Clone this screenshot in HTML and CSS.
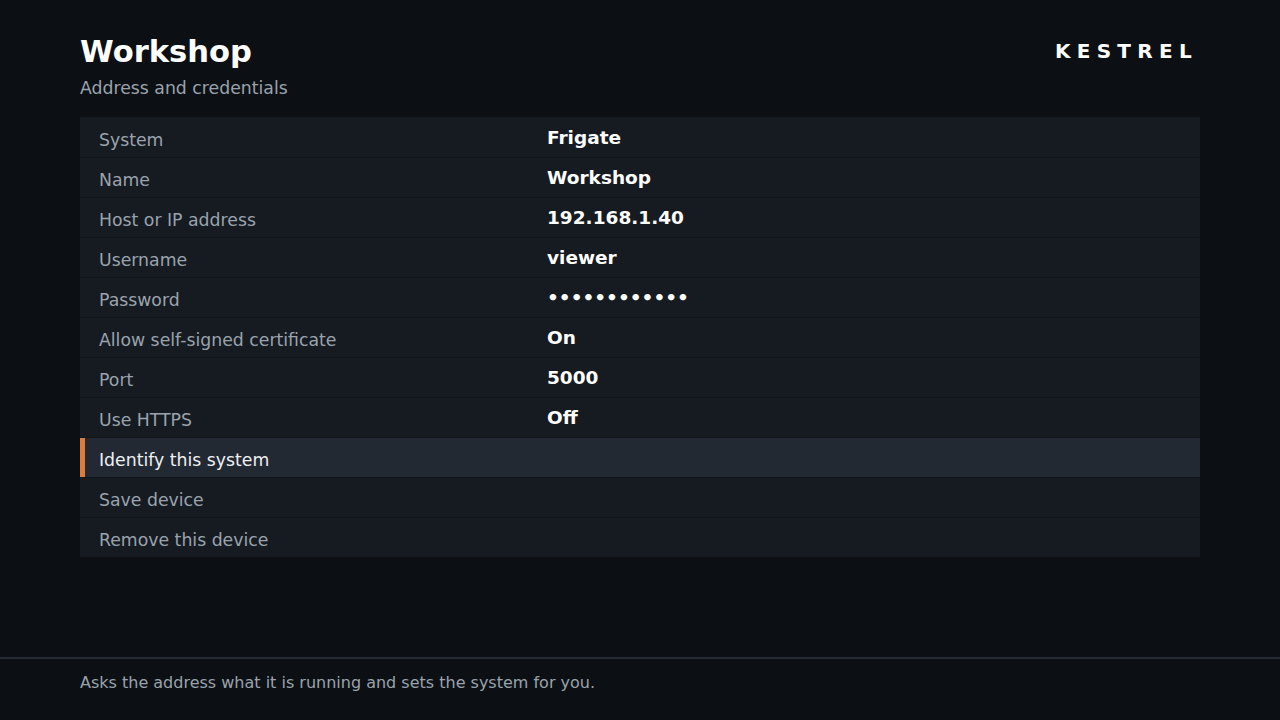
FILE: index.html
```html
<!DOCTYPE html>
<html lang="en">
<head>
<meta charset="utf-8">
<title>Workshop</title>
<link rel="stylesheet" href="styles.css">
</head>
<body>
<div class="page">
  <header class="header">
    <div class="heading">
      <h1 class="title">Workshop</h1>
      <p class="subtitle">Address and credentials</p>
    </div>
    <div class="brand">KESTREL</div>
  </header>
  <main class="list">
    <div class="row"><span class="label">System</span><span class="value">Frigate</span></div>
    <div class="row"><span class="label">Name</span><span class="value">Workshop</span></div>
    <div class="row"><span class="label">Host or IP address</span><span class="value">192.168.1.40</span></div>
    <div class="row"><span class="label">Username</span><span class="value">viewer</span></div>
    <div class="row"><span class="label">Password</span><span class="value">••••••••••••</span></div>
    <div class="row"><span class="label">Allow self-signed certificate</span><span class="value">On</span></div>
    <div class="row"><span class="label">Port</span><span class="value">5000</span></div>
    <div class="row"><span class="label">Use HTTPS</span><span class="value">Off</span></div>
    <div class="row row-active"><span class="label">Identify this system</span></div>
    <div class="row"><span class="label">Save device</span></div>
    <div class="row"><span class="label">Remove this device</span></div>
  </main>
  <footer class="footer">
    <p class="hint">Asks the address what it is running and sets the system for you.</p>
  </footer>
</div>
</body>
</html>
```
FILE: styles.css
```css
* { box-sizing: border-box; }
html, body {
  margin: 0;
  padding: 0;
  background: #0c1014;
  font-family: "DejaVu Sans", "Liberation Sans", sans-serif;
  color: #e8eaed;
}
.page {
  width: 1280px;
  height: 720px;
  display: flex;
  flex-direction: column;
}
.header {
  display: flex;
  justify-content: space-between;
  align-items: flex-start;
  padding: 33px 80px 0 80px;
  margin-bottom: 19px;
}
.title {
  margin: 0;
  font-size: 30.6px;
  line-height: 37px;
  font-weight: bold;
  color: #ffffff;
}
.subtitle {
  margin: 8px 0 0 0;
  font-size: 17.3px;
  line-height: 20px;
  color: #9aa3ad;
}
.brand {
  margin-top: 6px;
  margin-right: 2px;
  font-size: 20px;
  line-height: 24px;
  font-weight: bold;
  letter-spacing: 6.3px;
  color: #ffffff;
}
.list {
  margin: 0 80px;
  background: #161b22;
  display: flex;
  flex-direction: column;
}
.row {
  height: 40px;
  display: flex;
  align-items: center;
  padding-left: 19px;
}
.row + .row {
  border-top: 1px solid #11151b;
}
.label {
  width: 448px;
  flex-shrink: 0;
  padding-top: 5px;
  font-size: 17.3px;
  color: #9aa3ad;
}
.value {
  font-size: 18.5px;
  font-weight: bold;
  color: #ffffff;
}
.row-active {
  background: #222933;
  box-shadow: inset 5px 0 0 #e07b3c;
}
.row-active .label {
  color: #eef0f2;
}
.footer {
  margin-top: auto;
  height: 63px;
  border-top: 2px solid #252c35;
  padding: 14px 80px 0 80px;
}
.hint {
  margin: 0;
  font-size: 16px;
  line-height: 19px;
  color: #9aa3ad;
}
```
